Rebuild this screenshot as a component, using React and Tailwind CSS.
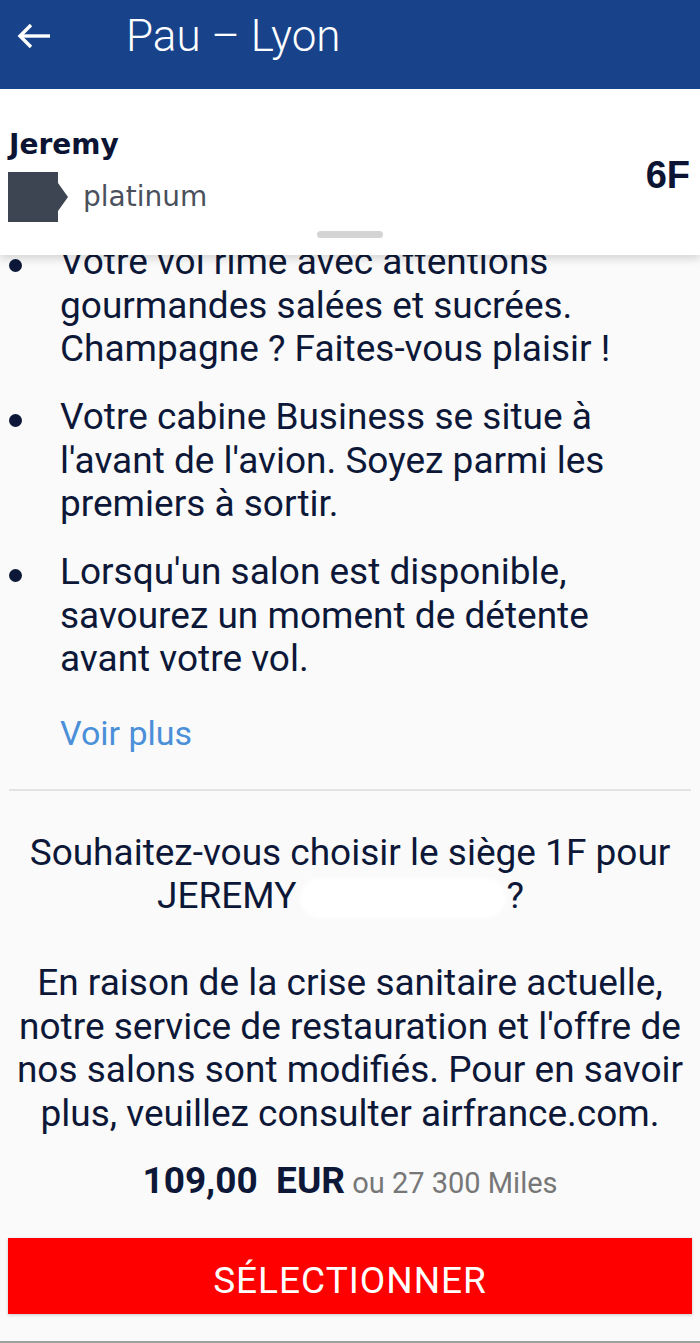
export default function App() {
  const bullets = [
    ["Votre vol rime avec attentions", "gourmandes salées et sucrées.", "Champagne ? Faites-vous plaisir !"],
    ["Votre cabine Business se situe à", "l'avant de l'avion. Soyez parmi les", "premiers à sortir."],
    ["Lorsqu'un salon est disponible,", "savourez un moment de détente", "avant votre vol."],
  ];
  const para = [
    "En raison de la crise sanitaire actuelle,",
    "notre service de restauration et l'offre de",
    "nos salons sont modifiés. Pour en savoir",
    "plus, veuillez consulter airfrance.com.",
  ];
  return (
    <div className="w-[700px] h-[1343px] overflow-hidden bg-[#fafafa] flex flex-col font-[family-name:Roboto,sans-serif] text-[#0d1838]">
      <header className="h-[89px] shrink-0 bg-[#18438b] pb-[17px] pl-[17px] flex items-center relative z-20">
        <svg width="34" height="26" viewBox="0 0 34 26" fill="none" stroke="white" strokeWidth="3.4">
          <path d="M33 13H3" />
          <path d="M14 2L3 13l11 11" />
        </svg>
        <h1 className="ml-[75px] text-[44px] leading-[52px] font-light text-white whitespace-nowrap">Pau – Lyon</h1>
      </header>

      <section className="relative z-10 shrink-0 bg-white shadow-[0_4px_8px_rgba(0,0,0,0.14)] pt-[40px] pb-[17px]">
        <div className="flex justify-between pl-[8px] pr-[10px]">
          <div>
            <div className="pl-[1px] font-[family-name:'DejaVu_Sans',sans-serif] font-bold text-[28px] leading-[32px] text-[#0b1433]">Jeremy</div>
            <div className="mt-[11px] flex items-center h-[50px]">
              <svg width="61" height="50" viewBox="0 0 61 50">
                <path d="M0 0H50V11L60 25L50 39V50H0Z" fill="#3e4552" />
              </svg>
              <span className="ml-[14px] font-[family-name:'DejaVu_Sans',sans-serif] text-[28px] leading-[32px] text-[#4a505c]">platinum</span>
            </div>
          </div>
          <div className="mt-[24px] font-[family-name:'Liberation_Sans',sans-serif] font-bold text-[38px] leading-[44px] text-[#0b1433]">6F</div>
        </div>
        <div className="mx-auto mt-[9px] h-[7px] w-[66px] rounded-full bg-[#d4d4d4]" />
      </section>

      <main className="relative z-0 -mt-[15px] flex flex-col">
        <ul className="flex flex-col gap-[24.5px] pl-[9px]">
          {bullets.map((lines, i) => (
            <li key={i} className="flex">
              <span className="mt-[18.5px] w-[13px] h-[13px] rounded-full bg-[#0d1838] shrink-0" />
              <div className="ml-[38px] text-[37px] leading-[43.5px]">
                {lines.map((l, j) => (
                  <div key={j} className="whitespace-nowrap">{l}</div>
                ))}
              </div>
            </li>
          ))}
        </ul>

        <div className="mt-[32px] pl-[60px] text-[34px] leading-[40px] text-[#4b8fd9]">Voir plus</div>

        <div className="mt-[36px] mx-[9px] h-[2px] bg-[#e3e3e3]" />

        <div className="mt-[40px] text-center text-[37px] leading-[43.5px]">
          <div className="whitespace-nowrap">Souhaitez-vous choisir le siège 1F pour</div>
          <div className="whitespace-nowrap">
            JEREMY
            <span className="inline-block align-middle ml-[4px] w-[206px] h-[40px] rounded-[20px] bg-white blur-[2px]" />
            ?
            <span className="inline-block w-[19px]" />
          </div>
        </div>

        <div className="mt-[43px] text-center text-[37px] leading-[43.5px]">
          {para.map((l, j) => (
            <div key={j} className="whitespace-nowrap">{l}</div>
          ))}
        </div>

        <div className="mt-[24px] text-center leading-[44px] whitespace-nowrap">
          <span className="text-[37px] font-bold">109,00{"\u00a0\u00a0"}EUR</span>
          <span className="text-[29px] text-[#777777]"> ou 27 300 Miles</span>
        </div>

        <button className="mt-[28px] mx-[8px] h-[76px] bg-[#fe0000] text-white flex items-center justify-center pt-[10px] text-[37px] tracking-[1px] shadow-[0_1px_3px_rgba(0,0,0,0.2)]">
          SÉLECTIONNER
        </button>
      </main>

      <div className="flex-1" />
      <div className="h-[2px] shrink-0 bg-[#a0a0a0]" />
    </div>
  );
}
